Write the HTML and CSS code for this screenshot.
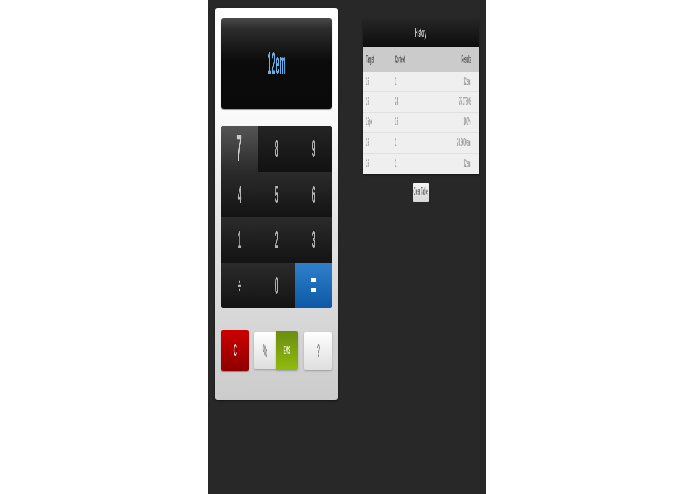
FILE: index.html
```html
<!DOCTYPE html>
<html lang="en">
<head>
<meta charset="utf-8">
<title>Em Calculator</title>
<link rel="stylesheet" href="styles.css">
</head>
<body>
<div class="stage">
  <main class="calc">
    <div class="display"><span class="squeeze">12em</span></div>
    <div class="keypad">
      <button class="key active"><span class="squeeze">7</span></button>
      <button class="key top"><span class="squeeze">8</span></button>
      <button class="key top"><span class="squeeze">9</span></button>
      <button class="key"><span class="squeeze">4</span></button>
      <button class="key"><span class="squeeze">5</span></button>
      <button class="key"><span class="squeeze">6</span></button>
      <button class="key"><span class="squeeze">1</span></button>
      <button class="key"><span class="squeeze">2</span></button>
      <button class="key"><span class="squeeze">3</span></button>
      <button class="key op"><span class="squeeze">÷</span></button>
      <button class="key"><span class="squeeze">0</span></button>
      <button class="key equals"><span class="squeeze">=</span></button>
    </div>
    <div class="controls">
      <button class="ctl clear"><span class="squeeze">C</span></button>
      <div class="toggle">
        <button class="ctl pct"><span class="squeeze">%</span></button>
        <button class="ctl em"><span class="squeeze">EMS</span></button>
      </div>
      <button class="ctl help"><span class="squeeze">?</span></button>
    </div>
  </main>
  <aside class="side">
    <section class="history">
      <h2 class="history-title"><span class="squeeze">History</span></h2>
      <div class="row head"><span class="c1"><span class="squeeze">Target</span></span><span class="c2"><span class="squeeze">Context</span></span><span class="c3"><span class="squeeze">Results</span></span></div>
      <div class="row"><span class="c1"><span class="squeeze">16</span></span><span class="c2"><span class="squeeze">1</span></span><span class="c3"><span class="squeeze">12em</span></span></div>
      <div class="row"><span class="c1"><span class="squeeze">16</span></span><span class="c2"><span class="squeeze">24</span></span><span class="c3"><span class="squeeze">75.0750%</span></span></div>
      <div class="row"><span class="c1"><span class="squeeze">16px</span></span><span class="c2"><span class="squeeze">16</span></span><span class="c3"><span class="squeeze">100%</span></span></div>
      <div class="row"><span class="c1"><span class="squeeze">16</span></span><span class="c2"><span class="squeeze">1</span></span><span class="c3"><span class="squeeze">20.6000em</span></span></div>
      <div class="row"><span class="c1"><span class="squeeze">16</span></span><span class="c2"><span class="squeeze">1</span></span><span class="c3"><span class="squeeze">12em</span></span></div>
    </section>
    <button class="clear-table"><span class="squeeze">Clear Table</span></button>
  </aside>
</div>
</body>
</html>
```
FILE: styles.css
```css
html, body { margin: 0; height: 100%; background: #fff; }
body { font-family: "Liberation Sans", Arial, sans-serif; overflow: hidden; }
button { font-family: inherit; border: 0; padding: 0; margin: 0; cursor: pointer; }

.squeeze { display: inline-block; transform: scaleX(.27); white-space: nowrap; will-change: transform; filter: blur(.4px); }

.stage {
  width: 278px; height: 494px; margin-left: 208px;
  background: #282828; box-sizing: border-box;
  padding: 8px 7px 0; display: flex; gap: 25px; align-items: flex-start;
}

.calc {
  width: 123px; height: 392px; box-sizing: border-box; flex: none;
  padding: 10px 6px 0; border-radius: 3px;
  background: linear-gradient(#fff 0, #fcfcfc 25%, #e4e4e4 55%, #cccccc 100%);
  box-shadow: 0 1px 2px rgba(0,0,0,.5);
}
.display {
  height: 91px; border-radius: 3px;
  background: linear-gradient(#4a4a4a 0, #2c2c2c 12%, #0b0b0b 48%, #0a0a0a 100%);
  box-shadow: 0 1px 1px rgba(0,0,0,.4);
  display: flex; align-items: center; justify-content: center;
  color: #6aaee6; font-size: 31px; line-height: 1; font-weight: 700;
}
.display .squeeze { transform: scaleX(.23); }
.keypad {
  margin-top: 17px; height: 182px; display: grid; border-radius: 3px; overflow: hidden;
  grid-template-columns: 37px 37px 37px; grid-template-rows: 46px 45px 46px 45px;
  background: #1c1c1c;
}
.key {
  color: #b4b4b4; font-size: 24px; line-height: 1; font-weight: 700;
  background: linear-gradient(#2b2b2b, #131313);
  display: flex; align-items: center; justify-content: center;
}
.key.top { background: linear-gradient(#242424, #111); }
.key.active { background: linear-gradient(#555, #2a2a2a); font-size: 36px; color: #ccc; }
.key.op { font-size: 20px; }
.key.equals { background: linear-gradient(#2f80cb, #0d58a6); color: #fff; font-size: 36px; }
.controls { margin-top: 22px; display: flex; align-items: center; gap: 5px; height: 41px; }
.ctl { display: flex; align-items: center; justify-content: center; line-height: 1; font-weight: 700; }
.clear {
  width: 28px; height: 41px; border-radius: 2px; color: #f8dcdc; font-size: 17px;
  background: linear-gradient(#cc0000, #8e0000); box-shadow: 0 1px 1px rgba(0,0,0,.35);
}
.toggle { display: flex; align-items: center; height: 39px; }
.pct, .help { color: #8a8a8a; font-size: 18px; background: linear-gradient(#fff, #dedede); }
.pct { width: 22px; height: 37px; border-radius: 2px 0 0 2px; box-shadow: 0 1px 2px rgba(0,0,0,.25); }
.em { width: 22px; height: 39px; color: #e6eec6; font-size: 11px; background: linear-gradient(#6c8d10, #8fbb0e); border-radius: 0 2px 2px 0; box-shadow: 0 1px 2px rgba(0,0,0,.25); }
.help { width: 28px; height: 38px; margin-left: 1px; border-radius: 2px; box-shadow: 0 1px 2px rgba(0,0,0,.25); }

.side { width: 116px; flex: none; padding-top: 11px; display: flex; flex-direction: column; align-items: center; }
.history { width: 116px; background: #efefef; box-shadow: 0 1px 2px rgba(0,0,0,.5); }
.history-title {
  margin: 0; height: 28px; display: flex; align-items: center; justify-content: center;
  background: linear-gradient(#252525, #0d0d0d); color: #c8c8c8; font-size: 12px; font-weight: 700; line-height: 1;
}
.row {
  height: 20.4px; display: flex; align-items: center; color: #a0a0a0; font-size: 10px; line-height: 1; font-weight: 700;
  border-bottom: 1px solid #e0e0e0; box-sizing: border-box; padding: 0 8px 0 3px;
}
.row:last-child { border-bottom: 0; }
.row.head { height: 25px; background: #cbcbcb; color: #606060; border-bottom: 0; }
.c1 { width: 29px; } .c2 { flex: 1; } .c3 { text-align: right; }
.c1 .squeeze, .c2 .squeeze { transform-origin: left center; }
.c3 .squeeze { transform-origin: right center; }
.clear-table {
  margin-top: 9px; width: 16px; height: 19px; background: linear-gradient(#f4f4f4, #d8d8d8);
  color: #777; font-size: 10px; line-height: 1; font-weight: 700; display: flex; align-items: center; justify-content: center;
  border-radius: 1px; overflow: visible;
}
```
